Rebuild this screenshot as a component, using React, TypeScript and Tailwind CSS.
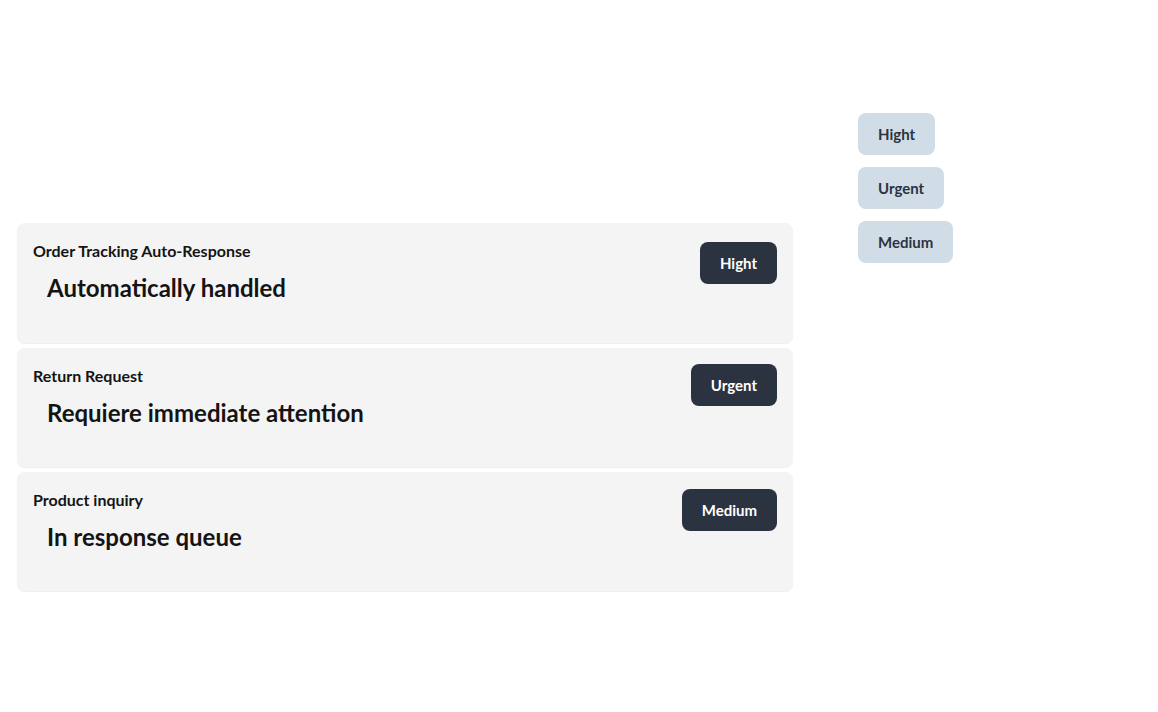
import React from 'react';

const tickets = [
  { title: 'Order Tracking Auto-Response', status: 'Automatically handled', priority: 'Hight', height: 'h-[120px]', badgeTop: 'mt-[19px]' },
  { title: 'Return Request', status: 'Requiere immediate attention', priority: 'Urgent', height: 'h-[119px]', badgeTop: 'mt-[16px]' },
  { title: 'Product inquiry', status: 'In response queue', priority: 'Medium', height: 'h-[119px]', badgeTop: 'mt-[17px]' },
];

const legend = ['Hight', 'Urgent', 'Medium'];

export default function App() {
  return (
    <div className="flex min-h-[712px] w-full bg-white pl-[17px] text-[#141414]" style={{ fontFamily: 'Lato, "Open Sans", sans-serif' }}>
      <div className="mt-[223px] flex w-[776px] flex-col gap-[5px]">
        {tickets.map((t) => (
          <div
            key={t.title}
            className={`${t.height} flex items-start justify-between rounded-lg bg-[#f4f4f4] px-4 shadow-[0_1px_1px_rgba(0,0,0,0.07)]`}
          >
            <div className="pt-[18px]">
              <div className="text-[16px] font-bold leading-5">{t.title}</div>
              <div className="mt-[11px] ml-[14px] text-[24px] font-bold leading-8">{t.status}</div>
            </div>
            <span className={`${t.badgeTop} flex h-[42px] items-center rounded-lg bg-[#2b3341] px-5 text-[15px] font-bold text-white`}>
              {t.priority}
            </span>
          </div>
        ))}
      </div>

      <div className="ml-[65px] mt-[113px] flex flex-col items-start gap-3">
        {legend.map((p) => (
          <span key={p} className="flex h-[42px] items-center rounded-lg bg-[#d0dde6] px-5 text-[15px] font-bold text-[#2b3341]">
            {p}
          </span>
        ))}
      </div>
    </div>
  );
}
